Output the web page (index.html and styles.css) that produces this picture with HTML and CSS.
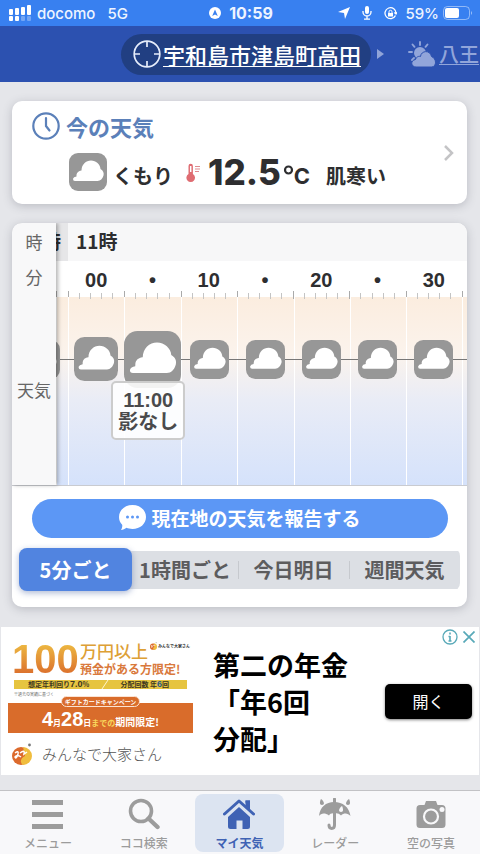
FILE: index.html
```html
<!DOCTYPE html>
<html lang="ja">
<head>
  <meta charset="UTF-8" />
  <meta name="viewport" content="width=device-width, initial-scale=1" />
  <title>マイ天気</title>
  <link rel="stylesheet" href="styles.css">
</head>
<body>

<!-- Shared icons -->
<svg class="defs" width="0" height="0" aria-hidden="true">
  <symbol id="cloud" viewBox="0 0 38 38">
    <rect width="38" height="38" rx="9" fill="#979797"/>
    <path fill="#fff" d="M6 28 Q3.800 28 4 25.800 Q4.500 24 7.500 23.500 Q7 19.500 10.500 18 Q11.500 17.400 12.500 17.500 C12.500 11.500 17 7.600 22 7.600 C27 7.600 31.300 11.500 31.500 16 C34.200 17.500 35.200 20 34.500 22.500 C33.500 25.800 31.500 28 28.500 28 Z"/>
  </symbol>
</svg>

<!-- Status bar -->
<div class="status">
  <div class="status-left">
    <svg width="22" height="16" viewBox="0 0 22 16" fill="#fff">
      <rect x="0" y="4" width="4" height="6" rx="1"/><rect x="6" y="3" width="4" height="7" rx="1"/><rect x="12" y="2" width="4" height="8" rx="1"/><rect x="18" y="0" width="4" height="10" rx="1"/>
      <rect x="0" y="11" width="4" height="5" rx="1"/><rect x="6" y="11" width="4" height="5" rx="1"/><rect x="12" y="11" width="4" height="5" rx="1" opacity=".3"/><rect x="18" y="11" width="4" height="5" rx="1" opacity=".3"/>
    </svg>
    <span>docomo</span>
    <span class="network">5G</span>
  </div>
  <div class="status-mid">
    <svg width="12" height="12" viewBox="0 0 12 12">
      <circle cx="6" cy="6" r="6" fill="#fff"/>
      <path d="M6 2.500 L8.800 9 L6 7.500 L3.200 9 Z" fill="#3880f0"/>
    </svg>
    <span>10:59</span>
  </div>
  <div class="status-right">
    <svg width="12" height="12" viewBox="0 0 12 12"><path d="M12 0 L7 12 L6 6 L0 5 Z" fill="#fff"/></svg>
    <svg width="10" height="14" viewBox="0 0 10 14" fill="none" stroke="#fff" stroke-width="1.300">
      <rect x="3" y="0" width="4" height="8" rx="2" fill="#fff" stroke="none"/>
      <path d="M1 5 V6 A4 4 0 0 0 9 6 V5 M5 10 V13 M2 13.200 H8"/>
    </svg>
    <svg width="13" height="13" viewBox="0 0 13 13" fill="none" stroke="#fff" stroke-width="1.300">
      <path d="M11.500 8.500 A5.500 5.500 0 1 1 12 6.500 M10.300 5.500 L12 7 L13 5.200"/>
      <rect x="4" y="6" width="5" height="3.500" fill="#fff" stroke="none"/>
      <path d="M5 6 V4.800 A1.500 1.500 0 0 1 8 4.800 V6" stroke-width="1"/>
    </svg>
    <span>59%</span>
    <svg width="30" height="14" viewBox="0 0 30 14">
      <rect x=".5" y=".5" width="26" height="13" rx="4" fill="none" stroke="#fff" stroke-opacity=".45"/>
      <rect x="2" y="2" width="14" height="10" rx="2" fill="#fff"/>
      <path d="M28 5 Q30 7 28 9 Z" fill="#fff" opacity=".5"/>
    </svg>
  </div>
</div>

<!-- Place switcher -->
<header class="places">
  <a class="place current" href="#here">
    <svg width="28" height="28" viewBox="0 0 28 28" fill="none" stroke="#e6edfb" stroke-width="1.700">
      <circle cx="14" cy="14" r="12.800"/>
      <path d="M14 1 V7 M14 21 V27 M1 14 H7 M21 14 H27"/>
    </svg>
    <span class="place-name">宇和島市津島町高田</span>
  </a>
  <div class="next">
    <svg width="7" height="12" viewBox="0 0 7 12"><path d="M0 1 L7 6 L0 11 Z" fill="#90a4d8"/></svg>
    <a class="place other" href="#hachioji">
      <svg width="28" height="27" viewBox="0 0 28 27">
        <g stroke="#91a5da" stroke-width="1.900" stroke-linecap="round">
          <path d="M12 1 V4 M4.500 3.500 L6.500 5.800 M1 11 H4 M19.500 3.500 L17.500 5.800 M4 19 L6 17"/>
        </g>
        <circle cx="12" cy="12" r="6" fill="#91a5da"/>
        <path d="M8 26 C3 26 2 19.500 7.500 18.500 C8.500 15.500 11 15 12.500 15.500 C13 9.500 22 8.500 23.500 15.500 C28.500 17.500 29 25 24 26 Z" fill="#91a5da" stroke="#2c51b0" stroke-width="1"/>
      </svg>
      <span class="place-name">八王</span>
    </a>
  </div>
</header>

<main>
  <!-- Current weather -->
  <a class="card now" href="#now">
    <div class="now-body">
      <h2>
        <svg width="28" height="28" viewBox="0 0 28 28" fill="none" stroke="#5b80b9" stroke-width="2.200" stroke-linecap="round">
          <circle cx="14" cy="14" r="12.700"/>
          <path d="M14 6 V14 L17.500 18.500"/>
        </svg>
        今の天気
      </h2>
      <div class="now-row">
        <svg class="now-icon" width="38" height="38"><use href="#cloud"/></svg>
        <span class="sky">くもり</span>
        <svg class="thermo" width="15" height="20" viewBox="0 0 15 20">
          <path d="M2.500 11 V3 A2.200 2.200 0 0 1 6.900 3 V11 A4.300 4.300 0 1 1 2.500 11 Z" fill="#df6c72"/>
          <path d="M4.700 3 V9" stroke="#fff" stroke-width="1.500"/>
          <path d="M9 3.500 H14 M9 6 H14 M9 8.500 H13" stroke="#df8b90" stroke-width="1"/>
        </svg>
        <span class="temp">12.5</span>
        <svg class="degree" width="11" height="22" viewBox="0 0 11 22"><circle cx="5.500" cy="9" r="3.500" fill="none" stroke="#2e2e30" stroke-width="2.200"/></svg>
        <span class="unit">C</span>
        <span class="feel">肌寒い</span>
      </div>
    </div>
    <svg class="chevron" width="10" height="16" viewBox="0 0 10 16" fill="none" stroke="#c4c4c6" stroke-width="2.500"><path d="M1 1 L8 8 L1 15"/></svg>
  </a>

  <!-- Five minute forecast -->
  <section class="card forecast">
    <div class="timeline">
      <div class="labels">
        <span class="label-hour">時</span>
        <span class="label-minute">分</span>
        <span class="label-sky">天気</span>
      </div>
      <div class="track">
        <div class="hours">
          <div class="hour past">10時</div>
          <div class="hour">11時</div>
        </div>
        <div class="minutes">
          <div class="minute"></div>
          <div class="minute">00</div>
          <div class="minute">•</div>
          <div class="minute">10</div>
          <div class="minute">•</div>
          <div class="minute">20</div>
          <div class="minute">•</div>
          <div class="minute">30</div>
          <div class="minute"></div>
        </div>
        <div class="skies">
          <div class="slot edge"><svg><use href="#cloud"/></svg></div>
          <div class="slot near"><svg><use href="#cloud"/></svg></div>
          <div class="slot selected">
            <svg><use href="#cloud"/></svg>
            <div class="tip"><span>11:00</span><span>影なし</span></div>
          </div>
          <div class="slot"><svg><use href="#cloud"/></svg></div>
          <div class="slot"><svg><use href="#cloud"/></svg></div>
          <div class="slot"><svg><use href="#cloud"/></svg></div>
          <div class="slot"><svg><use href="#cloud"/></svg></div>
          <div class="slot"><svg><use href="#cloud"/></svg></div>
          <div class="slot"></div>
        </div>
      </div>
    </div>

    <button class="report" type="button">
      <svg width="27" height="25" viewBox="0 0 27 25">
        <path d="M13.500 0 C21 0 27 5 27 12 C27 19 21 24 13.500 24 C11 24 9 23.500 7.500 22.800 C6 24 4 24.800 2 25 C3 23.500 3.500 21.500 3.200 19.800 C1 17.500 0 15 0 12 C0 5 6 0 13.500 0 Z" fill="#fff"/>
        <g fill="#5c97f5"><circle cx="8.500" cy="12" r="1.500"/><circle cx="13.500" cy="12" r="1.500"/><circle cx="18.500" cy="12" r="1.500"/></g>
      </svg>
      現在地の天気を報告する
    </button>

    <div class="ranges">
      <button class="range active" type="button">5分ごと</button>
      <button class="range" type="button">1時間ごと</button>
      <button class="range" type="button">今日明日</button>
      <button class="range" type="button">週間天気</button>
    </div>
  </section>

  <!-- Advertisement -->
  <section class="ad">
    <div class="ad-left">
      <div class="banner">
        <div class="banner-top">
          <span class="hundred">100</span>
          <div class="banner-copy">
            <span class="over">万円以上</span>
            <span class="limit">預金がある方限定!</span>
          </div>
          <span class="mini-brand">
            <svg width="7" height="8" viewBox="0 0 20 22"><use href="#brand"/></svg>
            みんなで大家さん
          </span>
        </div>
        <div class="strip">
          <span>想定年利回り<b>7.0</b>%</span>
          <svg width="8" height="9" viewBox="0 0 8 9"><path d="M1 9 L7 0" stroke="#fff6cf"/></svg>
          <span>分配回数 年<b class="six">6</b>回</span>
        </div>
        <small class="note">※過去の実績に基づく</small>
        <div class="band">
          <span class="ribbon">ギフトカードキャンペーン</span>
          <p class="deadline"><b>4</b><span>月</span><b>28</b><span>日</span><span class="until">までの</span><span class="period">期間限定!</span></p>
        </div>
      </div>
      <div class="brand">
        <svg width="20" height="22" viewBox="0 0 20 22">
          <g id="brand">
            <circle cx="9" cy="13" r="9" fill="#dc6a2c"/>
            <path d="M11 4 A9 9 0 0 1 11 22 C7 19 9 15 13 13 Z" fill="#f0bd3e"/>
            <path d="M3 10 Q7 7 6 11 Q4 17 3 14 Q5 11 9 14 M8 10 Q13 6 12 11 L15 9" fill="none" stroke="#fff" stroke-width="1.500"/>
            <circle cx="17.500" cy="2" r="1.400" fill="#777"/>
          </g>
        </svg>
        <span>みんなで大家さん</span>
      </div>
    </div>
    <p class="ad-title">第二の年金<br>「年6回<br>分配」</p>
    <a class="open" href="#open">開く</a>
    <div class="ad-marks">
      <button type="button" aria-label="広告について">
        <svg width="16" height="16" viewBox="0 0 16 16" fill="none" stroke="#58a9b8"><circle cx="8" cy="8" r="7" stroke-width="1.300"/><path d="M8 3.500 V5.500 M8 7 V12.500 M6.500 7.500 H8 M6.500 12 H9.500" stroke-width="1.600"/></svg>
      </button>
      <button type="button" aria-label="閉じる">
        <svg width="12" height="12" viewBox="0 0 12 12" stroke="#58a9b8" stroke-width="1.700"><path d="M.5 .5 L11.500 11.500 M11.500 .5 L.5 11.500"/></svg>
      </button>
    </div>
  </section>
</main>

<!-- Tab bar -->
<nav class="tabs">
  <a href="#menu">
    <svg width="32" height="32" viewBox="0 0 32 32" fill="currentColor"><path d="M0 2 H31 V7 H0 Z M0 14 H31 V19 H0 Z M0 26 H31 V31 H0 Z"/></svg>
    メニュー
  </a>
  <a href="#search">
    <svg width="32" height="32" viewBox="0 0 32 32" fill="none" stroke="currentColor"><circle cx="13" cy="13" r="10.500" stroke-width="3.600"/><path d="M20.500 20.500 L29.500 29" stroke-width="4.400" stroke-linecap="round"/></svg>
    ココ検索
  </a>
  <a class="active" href="#my">
    <svg width="32" height="32" viewBox="0 0 32 32"><path d="M22.500 2.500 H27 V13 H22.500 Z" fill="currentColor"/><path d="M5 19 L16 9 L27 19 V28.500 Q27 31 24.500 31 H19.500 V22.500 H13.500 V31 H7.500 Q5 31 5 28.500 Z" fill="currentColor"/><path d="M1.500 16 L16 3 L30.500 16" fill="none" stroke="#dce4f1" stroke-width="6"/><path d="M1.500 16 L16 3 L30.500 16" fill="none" stroke="currentColor" stroke-width="3" stroke-linecap="round" stroke-linejoin="round"/><path d="M22.500 2.500 H27 V12 L22.500 8 Z" fill="currentColor"/></svg>
    マイ天気
  </a>
  <a href="#radar">
    <svg width="34" height="32" viewBox="0 0 34 32">
      <path d="M1 18 C2 9 8 4 16 4 C25 4 31 9 32.500 18 C30 15 26 14.500 23 17.500 C21 15.500 19 15 17 15.500 C14 15 12 15.500 11 17.500 C7 14.500 3 15 1 18 Z" fill="currentColor"/>
      <path d="M16.500 1 V27 C16.500 31.500 11 31.500 11 27" fill="none" stroke="currentColor" stroke-width="3" stroke-linecap="round"/>
      <path d="M3 1 C7 4 6.500 7 4 7 C1.500 7 1.500 4 3 1 Z M31 1 C27 4 27.500 7 30 7 C32.500 7 32.500 4 31 1 Z" fill="currentColor"/>
      <path d="M24 8 C20 11 20.500 14 23 14 C25.500 14 25.500 11 24 8 Z" fill="#f8f8fa"/>
    </svg>
    レーダー
  </a>
  <a href="#photo">
    <svg width="32" height="32" viewBox="0 0 32 32"><path d="M9.500 7 L11 3 H21 L22.500 7 H27 Q30.500 7 30.500 10.500 V26.500 Q30.500 30 27 30 H5 Q1.500 30 1.500 26.500 V10.500 Q1.500 7 5 7 Z" fill="currentColor"/><circle cx="16" cy="18.500" r="7" fill="none" stroke="#f8f8fa" stroke-width="2.200"/><circle cx="27" cy="11.500" r="2.500" fill="#f8f8fa"/></svg>
    空の写真
  </a>
</nav>

</body>
</html>
```
FILE: styles.css
```css
* {
  box-sizing: border-box;
}
body {
  font-family: 'Noto Sans CJK JP', sans-serif;
  margin: 0;
  min-height: 100vh;
  display: flex;
  flex-direction: column;
  background: #e5e6ea;
  color: #2e2e30;
}
a {
  color: inherit;
  text-decoration: none;
}
button {
  font: inherit;
  color: inherit;
  border: 0;
  padding: 0;
  background: none;
  cursor: pointer;
}
svg {
  flex: none;
  display: block;
}
h2, p {
  margin: 0;
}
.defs {
  position: absolute;
}

/* Status bar */
.status {
  height: 26px;
  padding: 0 7px 0 9px;
  display: grid;
  grid-template-columns: 1fr auto 1fr;
  align-items: center;
  background: #3880f0;
  color: #eef4ff;
  font: 500 15px Inter, sans-serif;
}
.status-left, .status-mid, .status-right {
  display: flex;
  align-items: center;
  gap: 8px;
}
.status-left {
  gap: 6px;
}
.network {
  margin-left: 6px;
}
.status-mid {
  font-size: 16px;
  font-weight: 700;
}
.status-right {
  justify-content: flex-end;
}
.status-right svg {
  margin-left: 4px;
}
.status-right span + svg {
  margin-left: -4px;
}

/* Places */
.places {
  height: 56px;
  padding-left: 12px;
  display: grid;
  grid-template-columns: minmax(0, 1fr) auto minmax(0, 1fr);
  align-items: center;
  background: #2c51b0;
  overflow: hidden;
}
.place {
  display: flex;
  align-items: center;
  font-size: 22px;
  line-height: 32px;
  white-space: nowrap;
}
.place-name {
  text-decoration: underline;
  text-decoration-thickness: 1px;
  text-underline-offset: 2px;
}
.current {
  grid-column: 2;
  height: 41px;
  padding: 0 10px 0 12px;
  gap: 2px;
  border-radius: 21px;
  background: #213f82;
  color: #fff;
  font-weight: 500;
}
.next {
  display: flex;
  align-items: center;
  gap: 24px;
  padding-left: 6px;
}
.other {
  gap: 3px;
  font-size: 20px;
  font-weight: 500;
  color: #91a5da;
}

main {
  flex: 1;
  padding: 19px 0 15px;
  display: flex;
  flex-direction: column;
}
.card {
  margin: 0 13px 19px 12px;
  border-radius: 10px;
  background: #fff;
  box-shadow: 0 2px 10px rgba(60, 65, 80, 0.25);
}

/* Current weather */
.now {
  height: 103px;
  padding: 11px 13px 11px 20px;
  display: flex;
  align-items: center;
}
.now-body {
  flex: 1;
}
.now h2 {
  display: flex;
  align-items: center;
  gap: 6px;
  font-size: 22px;
  line-height: 26px;
  color: #5b80b9;
}
.now-row {
  margin: 10px 0 0 37px;
  height: 44px;
  display: flex;
  align-items: center;
  font-size: 20px;
  line-height: 30px;
  font-weight: 700;
}
.sky {
  margin: 8px 13px 0 6px;
}
.temp {
  margin-left: 7px;
  font: 800 35px/38px Inter, sans-serif;
}
.thermo {
  margin-top: 2px;
}
.degree {
  margin-left: 2px;
}
.unit {
  margin-top: 8px;
  font: 700 22px/28px Inter, sans-serif;
}
.feel {
  margin: 8px 0 0 16px;
}

/* Forecast */
.forecast {
  height: 384px;
  margin-bottom: 20px;
  overflow: hidden;
}
.timeline {
  height: 263px;
  display: flex;
  border-bottom: 1px solid #c9cbd0;
}
.labels {
  flex: 0 0 44px;
  display: flex;
  flex-direction: column;
  align-items: center;
  background: #f8f8f9;
  color: #666;
  font-size: 17px;
  font-weight: 400;
  z-index: 1;
  box-shadow: 2px 0 4px rgba(0, 0, 0, 0.3);
}
.label-hour {
  line-height: 38px;
}
.label-minute {
  line-height: 32px;
}
.label-sky {
  margin: auto 0;
}
.track {
  flex: 1;
  min-width: 0;
}
.hours, .minutes, .skies {
  display: grid;
  grid-template-columns: 12px repeat(7, 1fr) 5px;
}
.hours {
  grid-template-columns: 12px 1fr;
  height: 38px;
  background: #f7f7f8;
  font-size: 19px;
  line-height: 36px;
  font-weight: 700;
}
.hour {
  padding-left: 8px;
}
.past {
  padding: 0 7px 0 0;
  display: flex;
  justify-content: flex-end;
  background: #e6e6e8;
  white-space: nowrap;
  overflow: hidden;
}
.minutes {
  height: 36px;
  font: 700 20px/38px 'Liberation Sans', sans-serif;
  text-align: center;
}
.minute {
  background:
    linear-gradient(#aaa, #aaa) left bottom / 1px 8px no-repeat,
    linear-gradient(#c4c4c4, #c4c4c4) 20% 100% / 1px 6px no-repeat,
    linear-gradient(#c4c4c4, #c4c4c4) 40% 100% / 1px 6px no-repeat,
    linear-gradient(#c4c4c4, #c4c4c4) 60% 100% / 1px 6px no-repeat,
    linear-gradient(#c4c4c4, #c4c4c4) 80% 100% / 1px 6px no-repeat;
}
.minute:first-child, .minute:last-child {
  background: linear-gradient(#aaa, #aaa) left bottom / 1px 8px no-repeat;
}
.skies {
  height: 188px;
  background: linear-gradient(#fbeddf, #fbf3ec 30%, #e9ecf6 55%, #d5e2fb);
}
.slot {
  position: relative;
  height: 188px;
  display: flex;
  justify-content: center;
  align-items: flex-start;
  padding-top: 43px;
  background:
    linear-gradient(#777, #777) 0 62px / 100% 1px no-repeat,
    linear-gradient(#fff, #fff) 0 0 / 1px 100% no-repeat;
}
.slot svg {
  width: 39px;
  height: 39px;
}
.near {
  padding-top: 40px;
}
.near svg {
  width: 44px;
  height: 44px;
}
.selected {
  padding-top: 34px;
}
.selected svg {
  width: 57px;
  height: 57px;
}
.edge {
  justify-content: flex-end;
  padding-right: 8px;
}
.tip {
  position: absolute;
  top: 84px;
  left: -13px;
  width: 74px;
  height: 59px;
  padding-top: 6px;
  display: flex;
  flex-direction: column;
  align-items: center;
  border: 2px solid #ccc;
  border-radius: 5px;
  background: rgba(255, 255, 255, 0.88);
  color: #4a4a4c;
  font: 700 20px/22px 'Liberation Sans', 'Noto Sans CJK JP', sans-serif;
  z-index: 1;
}
.report {
  width: calc(100% - 39px);
  height: 39px;
  margin: 13px 19px 10px 20px;
  padding-bottom: 2px;
  display: flex;
  align-items: center;
  justify-content: center;
  gap: 5px;
  border-radius: 20px;
  background: #5c97f5;
  color: #fff;
  font-size: 19px;
  font-weight: 700;
}
.ranges {
  margin: 0 7px;
  height: 43px;
  display: grid;
  grid-template-columns: 113px 106px 111px 1fr;
  align-items: center;
  background: linear-gradient(#dcdfe4, #dcdfe4) 0 3px / 100% 38px no-repeat;
  border-radius: 8px;
}
.range {
  height: 38px;
  color: #5c5c5e;
  font-size: 20px;
  font-weight: 700;
  line-height: 38px;
  white-space: nowrap;
}
.range + .range + .range {
  background: linear-gradient(#c6c9ce, #c6c9ce) 0 center / 1px 18px no-repeat;
}
.ranges .active {
  height: 43px;
  border-radius: 8px;
  background: #5184e0;
  color: #fff;
  box-shadow: 0 2px 6px rgba(50, 80, 150, 0.4);
}

/* Advertisement */
.ad {
  position: relative;
  height: 148px;
  margin: 0 1px;
  padding: 0 7px;
  display: flex;
  align-items: center;
  background: #fff;
}
.ad-left {
  flex: 0 0 185px;
  align-self: stretch;
  padding-top: 13px;
}
.banner-top {
  height: 38px;
  padding-left: 4px;
  display: flex;
}
.hundred {
  width: 68px;
  font: 700 40px/38px 'Liberation Sans', sans-serif;
  color: transparent;
  background: linear-gradient(#efc244, #d9662a);
  background-clip: text;
  -webkit-background-clip: text;
}
.banner-copy {
  display: flex;
  flex-direction: column;
  white-space: nowrap;
}
.over {
  width: 68px;
  font-size: 17px;
  line-height: 22px;
  font-weight: 500;
  color: #dda035;
}
.limit {
  width: 68px;
  font-size: 12px;
  line-height: 14px;
  font-weight: 700;
  color: #d9793c;
}
.mini-brand {
  display: flex;
  align-items: center;
  gap: 1px;
  height: 12px;
  margin-left: 2px;
  font-size: 4px;
  font-weight: 700;
  white-space: nowrap;
}
.strip {
  height: 9px;
  margin: 2px 6px 0;
  padding: 0 18px 0 14px;
  display: flex;
  align-items: center;
  justify-content: space-between;
  background: #e6c440;
  color: #3d3720;
  font-size: 7px;
  line-height: 9px;
  font-weight: 700;
}
.strip b {
  font: 700 9px/9px 'Liberation Sans', sans-serif;
}
.strip .six {
  color: #2d5c87;
}
.note {
  display: block;
  padding-left: 6px;
  height: 7px;
  font-size: 4px;
  line-height: 10px;
  color: #666;
}
.band {
  height: 37px;
  display: flex;
  flex-direction: column;
  align-items: center;
  background: linear-gradient(#d96c2b, #d96c2b) 0 100% / 100% 30px no-repeat;
  color: #fff;
}
.ribbon {
  padding: 0 3px;
  border: 1px solid #fbe3d3;
  border-radius: 7px;
  background: #d96c2b;
  font-size: 6px;
  line-height: 9px;
  font-weight: 700;
}
.deadline {
  display: flex;
  align-items: baseline;
  font-size: 8px;
  line-height: 24px;
  font-weight: 700;
}
.deadline b {
  font: 700 20px/24px 'Liberation Sans', sans-serif;
}
.until {
  color: #f8d65c;
}
.period {
  font-size: 10px;
}
.brand {
  margin: 9px 0 0 4px;
  display: flex;
  align-items: center;
  gap: 10px;
  color: #555;
  font-size: 15px;
  font-weight: 300;
  line-height: 24px;
  white-space: nowrap;
}
.ad-title {
  flex: 1;
  padding: 0 0 0 20px;
  color: #000;
  font-size: 27px;
  line-height: 37px;
  font-weight: 700;
  white-space: nowrap;
}
.open {
  flex: 0 0 87px;
  border-radius: 5px;
  background: #000;
  color: #fff;
  font-size: 16px;
  line-height: 35px;
  text-align: center;
  box-shadow: 0 1px 3px rgba(0, 0, 0, 0.5);
}
.ad-marks {
  position: absolute;
  top: 2px;
  right: 4px;
  display: flex;
  align-items: center;
  gap: 5px;
}

/* Tab bar */
.tabs {
  position: sticky;
  bottom: 0;
  height: 64px;
  padding: 3px 1px 2px 0;
  display: grid;
  grid-template-columns: repeat(5, 1fr);
  background: #f8f8fa;
  border-top: 1px solid #c2c2c5;
}
.tabs a {
  margin: 0 3px;
  padding-top: 4px;
  display: flex;
  flex-direction: column;
  align-items: center;
  gap: 5px;
  border-radius: 8px;
  color: #9c9c9c;
  font-size: 12px;
  line-height: 16px;
  font-weight: 500;
}
.tabs .active {
  background: #dce4f1;
  color: #3f62b4;
  font-weight: 700;
}
```
